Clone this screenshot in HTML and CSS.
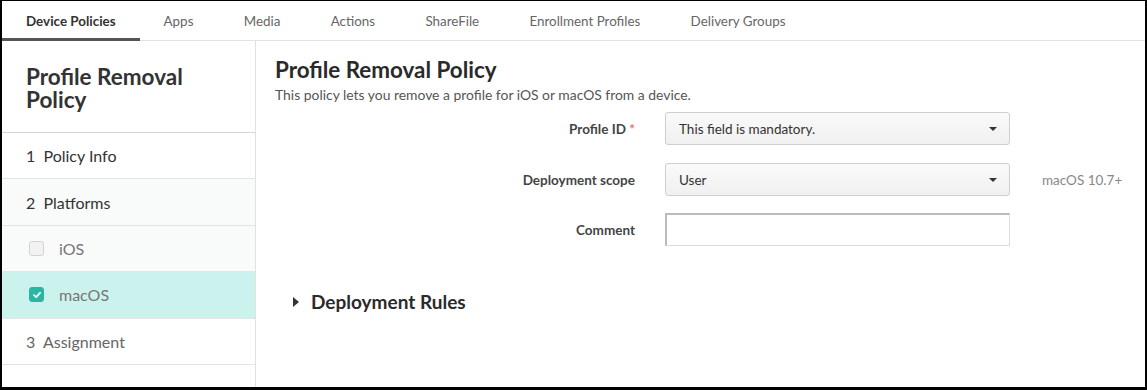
FILE: index.html
```html
<!DOCTYPE html>
<html lang="en">
<head>
    <meta charset="UTF-8">
    <title>Profile Removal Policy</title>
    <link rel="stylesheet" href="styles.css">
</head>
<body>
<div class="frame">
    <div class="topNav">
        <div class="tab active">Device Policies</div>
        <div class="tab">Apps</div>
        <div class="tab">Media</div>
        <div class="tab">Actions</div>
        <div class="tab">ShareFile</div>
        <div class="tab">Enrollment Profiles</div>
        <div class="tab">Delivery Groups</div>
    </div>

    <div class="content">
        <div class="sidebar">
            <div class="sideTitle">Profile Removal Policy</div>
            <div class="step">1&nbsp; Policy Info</div>
            <div class="step shaded">2&nbsp; Platforms</div>
            <div class="step sub shaded"><span class="check"></span>iOS</div>
            <div class="step sub selected"><span class="check on">
                <svg width="10" height="10" viewBox="0 0 10 10"><path d="M2 5.2 L4.2 7.2 L8 2.8" fill="none" stroke="#fff" stroke-width="1.8" stroke-linecap="round" stroke-linejoin="round"/></svg>
            </span>macOS</div>
            <div class="step muted">3&nbsp; Assignment</div>
        </div>

        <div class="main">
            <h1>Profile Removal Policy</h1>
            <p class="desc">This policy lets you remove a profile for iOS or macOS from a device.</p>

            <div class="formRow">
                <label>Profile ID <span class="req">*</span></label>
                <div class="select">This field is mandatory.<span class="caret"></span></div>
            </div>
            <div class="formRow">
                <label>Deployment scope</label>
                <div class="select">User<span class="caret"></span></div>
                <span class="hint">macOS 10.7+</span>
            </div>
            <div class="formRow">
                <label>Comment</label>
                <div class="textInput"></div>
            </div>

            <div class="rules"><span class="arrow"></span>Deployment Rules</div>
        </div>
    </div>
</div>
</body>
</html>
```

FILE: styles.css
```css
body {
    margin: 0;
    font-family: Lato, "Open Sans", sans-serif;
    color: #333;
    background-color: #fff;
}

.frame {
    box-sizing: border-box;
    width: 1147px;
    height: 390px;
    border-style: solid;
    border-color: #000;
    border-width: 1px 2px 3px 2px;
    display: flex;
    flex-direction: column;
    overflow: hidden;
}

.topNav {
    display: flex;
    height: 39px;
    border-bottom: 1px solid #e2e2e2;
}

.tab {
    padding: 0 26.3px 0 24px;
    display: flex;
    align-items: center;
    font-size: 13.4px;
    color: #666;
    box-sizing: border-box;
    border-bottom: 3px solid transparent;
    padding-top: 3px;
    margin-bottom: -1px;
}

.tab.active {
    font-weight: bold;
    color: #333;
    padding-right: 24px;
    border-bottom-color: #555;
}

.content {
    flex: 1;
    display: flex;
}

.sidebar {
    width: 253px;
    border-right: 1px solid #e2e2e2;
}

.sideTitle {
    font-size: 22.5px;
    font-weight: bold;
    line-height: 23px;
    color: #333;
    padding: 24px 40px 21px 24px;
    border-bottom: 1px solid #d6d6d6;
}

.step {
    height: 46.4px;
    box-sizing: border-box;
    display: flex;
    align-items: center;
    padding-left: 24px;
    font-size: 16px;
    color: #333;
    border-bottom: 1px solid #e4e4e4;
}

.step.shaded {
    background-color: #f9fafa;
}

.step.sub {
    color: #777;
    padding-left: 27px;
}

.step.selected {
    background-color: #ccf2ee;
}

.step.muted {
    color: #666;
}

.check {
    width: 13px;
    height: 13px;
    border: 1px solid #d3d3d3;
    border-radius: 3px;
    background-color: #f2f2f2;
    margin-right: 15px;
    display: flex;
    align-items: center;
    justify-content: center;
}

.check.on {
    background-color: #2bb5a3;
    border-color: #2bb5a3;
}

.main {
    flex: 1;
    padding: 15px 20px 0 19px;
}

h1 {
    margin: 0;
    font-size: 22.4px;
    line-height: 27px;
    color: #2a2a2a;
}

.desc {
    margin: 3px 0 9px 0;
    font-size: 13.9px;
    color: #555;
}

.formRow {
    display: flex;
    align-items: center;
    margin-bottom: 17px;
}

.formRow:first-of-type {
    margin-bottom: 18px;
}

.formRow label {
    width: 390px;
    text-align: right;
    padding-right: 30px;
    box-sizing: border-box;
    font-size: 13.5px;
    font-weight: bold;
    color: #444;
}

.req {
    color: #e57373;
}

.select {
    width: 345px;
    height: 33px;
    box-sizing: border-box;
    border: 1px solid #cfcfcf;
    border-radius: 3px;
    background: linear-gradient(#fafafa, #f0f0f0);
    display: flex;
    align-items: center;
    padding: 0 13px;
    font-size: 13.5px;
    color: #333;
    position: relative;
}

.caret {
    position: absolute;
    right: 12px;
    top: 14px;
    border-left: 4px solid transparent;
    border-right: 4px solid transparent;
    border-top: 4px solid #333;
}

.hint {
    margin-left: 32px;
    font-size: 13.5px;
    color: #888;
}

.textInput {
    width: 345px;
    height: 33px;
    box-sizing: border-box;
    border: 1px solid #ddd;
    border-top: 2px solid #bbb;
    border-left: 2px solid #bbb;
    background-color: #fff;
}

.rules {
    margin-top: 44px;
    padding-left: 18px;
    display: flex;
    align-items: center;
    font-size: 19px;
    font-weight: bold;
    color: #2a2a2a;
}

.arrow {
    border-top: 5px solid transparent;
    border-bottom: 5px solid transparent;
    border-left: 6px solid #333;
    margin: 0 12px 0 0;
}
```
